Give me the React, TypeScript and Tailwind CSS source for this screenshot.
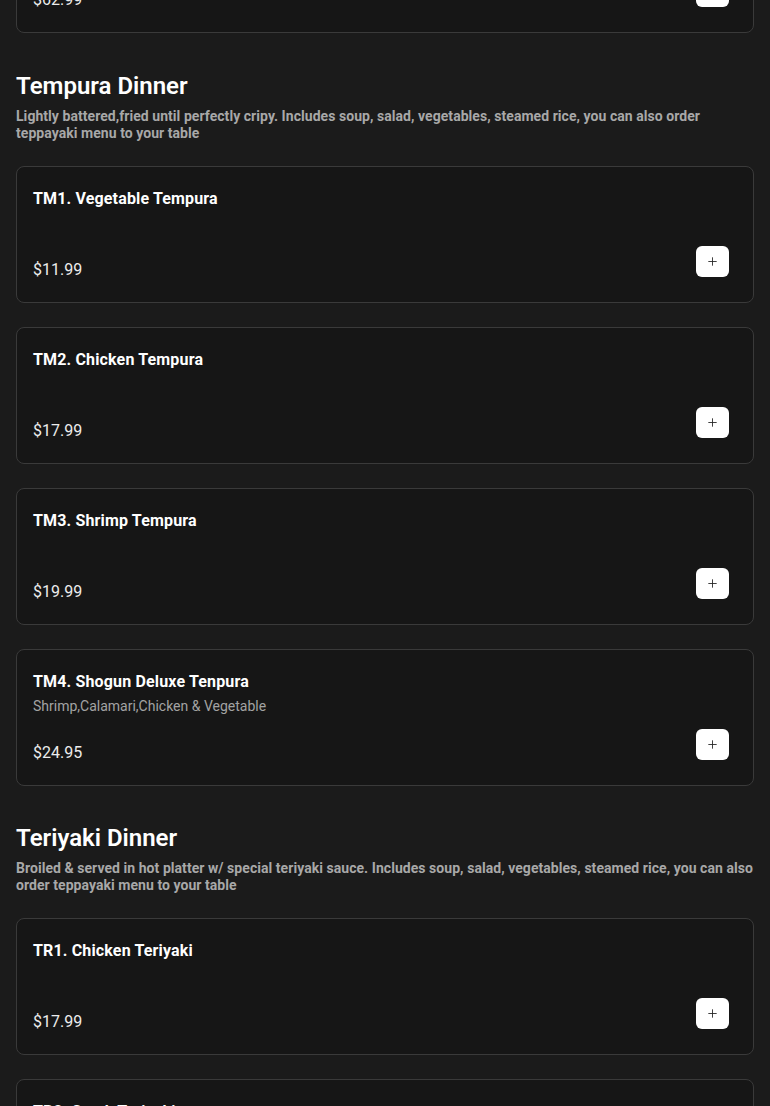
import { Plus } from "lucide-react";

type MenuItem = {
  name: string;
  description?: string;
  price: string;
};

type MenuSection = {
  title: string;
  description: string;
  items: MenuItem[];
};

const sections: MenuSection[] = [
  {
    title: "Tempura Dinner",
    description:
      "Lightly battered,fried until perfectly cripy. Includes soup, salad, vegetables, steamed rice, you can also order teppayaki menu to your table",
    items: [
      { name: "TM1. Vegetable Tempura", price: "$11.99" },
      { name: "TM2. Chicken Tempura", price: "$17.99" },
      { name: "TM3. Shrimp Tempura", price: "$19.99" },
      {
        name: "TM4. Shogun Deluxe Tenpura",
        description: "Shrimp,Calamari,Chicken & Vegetable",
        price: "$24.95",
      },
    ],
  },
  {
    title: "Teriyaki Dinner",
    description:
      "Broiled & served in hot platter w/ special teriyaki sauce. Includes soup, salad, vegetables, steamed rice, you can also order teppayaki menu to your table",
    items: [
      { name: "TR1. Chicken Teriyaki", price: "$17.99" },
      { name: "TR2. Steak Teriyaki", price: "$21.99" },
    ],
  },
];

function MenuCard({ item }: { item: MenuItem }) {
  return (
    <div className="flex h-[137px] flex-col rounded-lg border border-[#3a3a3a] bg-[#161616] px-4 pt-5">
      <h3 className="text-base leading-6 font-bold tracking-[0.15px] text-white">{item.name}</h3>
      <p className="mt-[2px] min-h-5 text-sm leading-5 text-[#a3a3a3]">
        {item.description}
      </p>
      <div className="mt-[13px] flex items-end justify-between">
        <span className="-mb-px text-base leading-6 text-[#ececec]">{item.price}</span>
        <button
          type="button"
          className="mr-2 mb-1 flex h-[31px] w-[33px] items-center justify-center rounded-md bg-white text-[#222]"
          aria-label={`Add ${item.name}`}
        >
          <Plus size={13} strokeWidth={1.6} />
        </button>
      </div>
    </div>
  );
}

export default function App() {
  return (
    <div className="min-h-screen overflow-hidden bg-[#1b1b1b] px-4 pb-10 font-['Roboto',sans-serif] text-white">
      <div className="-mt-[104px]">
        <MenuCard item={{ name: "S6. Shogun Special for Two", price: "$62.99" }} />
      </div>

      {sections.map((section, index) => (
        <section key={section.title} className={index === 0 ? "mt-[37px]" : "mt-9"}>
          <h2 className="text-2xl leading-8 font-semibold text-white">{section.title}</h2>
          <p className="mt-1.5 text-sm leading-[17px] font-bold tracking-[0.05px] text-[#a8a8a8]">
            {section.description}
          </p>
          <div className="mt-6 flex flex-col gap-6">
            {section.items.map((item) => (
              <MenuCard key={item.name} item={item} />
            ))}
          </div>
        </section>
      ))}
    </div>
  );
}
